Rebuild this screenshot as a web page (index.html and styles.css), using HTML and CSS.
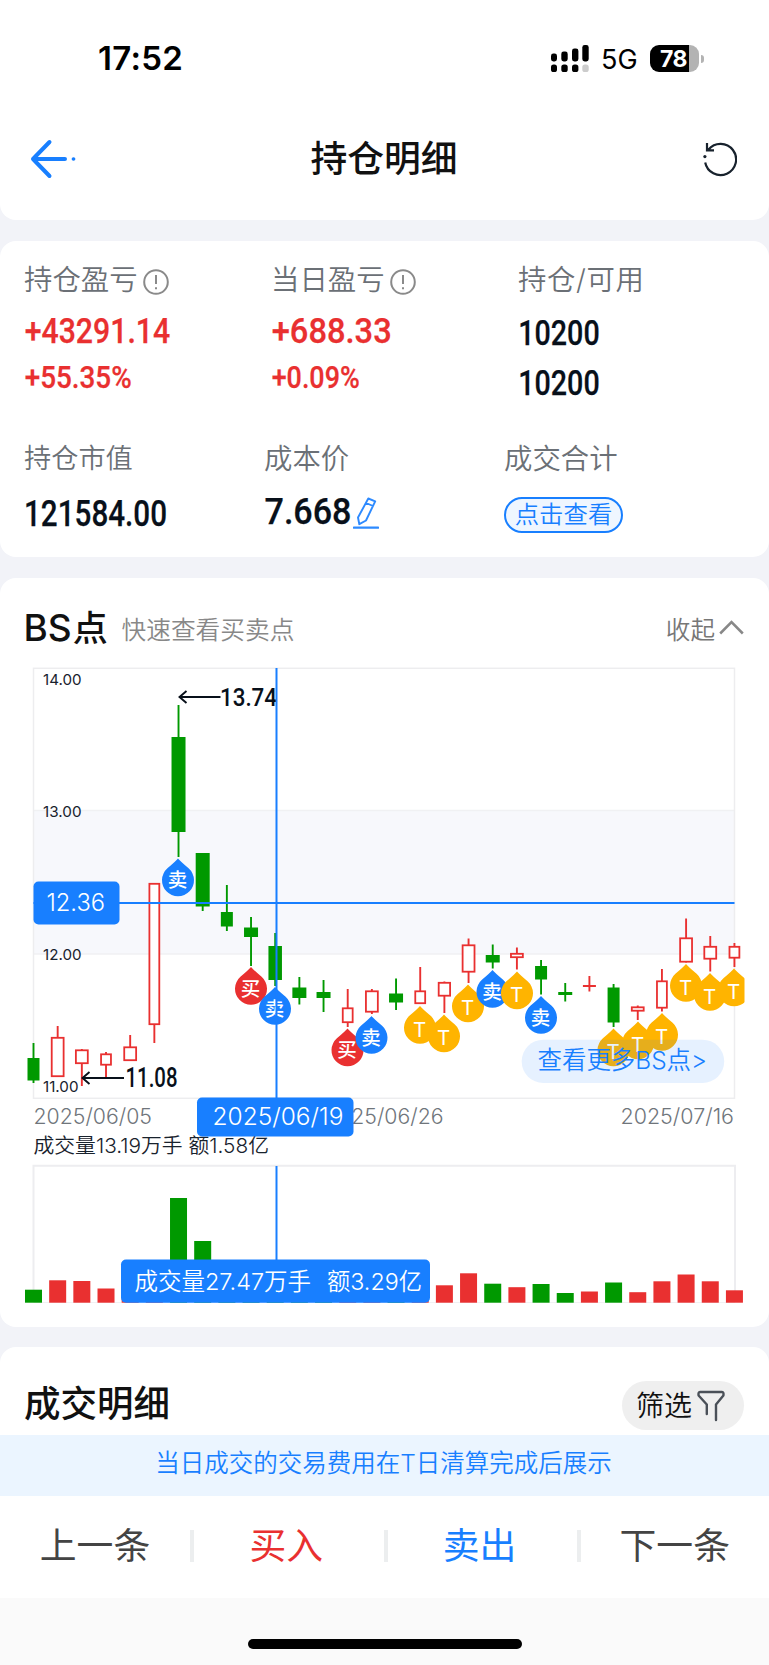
FILE: index.html
```html
<!DOCTYPE html>
<html lang="zh-CN">
<head>
<meta charset="utf-8">
<title>持仓明细</title>
<link rel="stylesheet" href="styles.css">
</head>
<body>
<div class="page">
  <header class="top">
    <div class="status">
      <span class="time">17:52</span>
      <div class="status-right">
        <svg class="signal" width="38" height="28" viewBox="0 0 38 28">
          <g fill="#000"><rect x="0" y="8.5" width="6" height="8" rx="2.4"/><rect x="10.3" y="6.5" width="6.4" height="10" rx="2.4"/><rect x="21" y="3.5" width="6.4" height="13" rx="2.4"/><rect x="31.3" y="0" width="6.4" height="16.5" rx="2.4"/>
          <rect x="0" y="19.5" width="6" height="7.5" rx="2.6"/><rect x="10.3" y="19.5" width="6.4" height="7.5" rx="2.6"/><rect x="21" y="19.5" width="6.4" height="7.5" rx="2.6"/></g>
          <rect x="31.3" y="19.5" width="6.4" height="7.5" rx="2.6" fill="#ccc"/>
        </svg>
        <span class="net">5G</span>
        <div class="battery"><span class="level">78</span></div>
        <span class="nub"></span>
      </div>
    </div>
    <div class="titlebar">
      <svg width="48" height="40" viewBox="0 0 48 40" fill="none" stroke="#187fff" stroke-width="4" stroke-linecap="round" stroke-linejoin="round"><path d="M20.5 3 4 20 20.5 37M4 20H36"/><path d="M44.4 20h.2" stroke-width="3.6"/></svg>
      <h1>持仓明细</h1>
      <svg width="34" height="36" viewBox="0 0 34 36" fill="none" stroke="#18222d" stroke-width="2.2"><path d="M5.5 8.5A15.6 15.6 0 1 1 2.2 21.5M4 2V9.3H11"/><circle cx="1.9" cy="15.6" r="1.6" fill="#18222d" stroke="none"/></svg>
    </div>
  </header>

  <section class="card summary">
    <div class="row row-a">
      <div class="cell">
        <div class="label">持仓盈亏<svg class="info" viewBox="0 0 26 26"><circle cx="13" cy="13" r="11.8"/><path d="M13 6v9M13 18.2v2"/></svg></div>
        <svg class="num red" width="148" height="30"><text x="-.3" y="26.5" font-size="35" textLength="145.5" lengthAdjust="spacingAndGlyphs">+43291.14</text></svg>
        <svg class="num red second" width="148" height="30"><text x="-.3" y="24.5" font-size="30.5" textLength="107" lengthAdjust="spacingAndGlyphs">+55.35%</text></svg>
      </div>
      <div class="cell">
        <div class="label">当日盈亏<svg class="info" viewBox="0 0 26 26"><circle cx="13" cy="13" r="11.8"/><path d="M13 6v9M13 18.2v2"/></svg></div>
        <svg class="num red" width="148" height="30"><text x="-.3" y="26.5" font-size="35" textLength="120" lengthAdjust="spacingAndGlyphs">+688.33</text></svg>
        <svg class="num red second" width="148" height="30"><text x="-.3" y="24.5" font-size="30.5" textLength="88" lengthAdjust="spacingAndGlyphs">+0.09%</text></svg>
      </div>
      <div class="cell">
        <div class="label wide">持仓/可用</div>
        <svg class="num" width="148" height="30"><text x="-.8" y="28.5" font-size="35.5" textLength="81.5" lengthAdjust="spacingAndGlyphs">10200</text></svg>
        <svg class="num third" width="148" height="30"><text x="-.8" y="28.5" font-size="35.5" textLength="81.5" lengthAdjust="spacingAndGlyphs">10200</text></svg>
      </div>
    </div>
    <div class="row row-b">
      <div class="cell">
        <div class="label small">持仓市值</div>
        <svg class="num" width="148" height="32"><text x="-1" y="28.5" font-size="36.5" textLength="143" lengthAdjust="spacingAndGlyphs">121584.00</text></svg>
      </div>
      <div class="cell">
        <div class="label">成本价</div>
        <div class="cost">
          <svg class="num" width="87" height="32"><text x="-.5" y="26.5" font-size="37" textLength="87" lengthAdjust="spacingAndGlyphs">7.668</text></svg>
          <svg width="26" height="33" viewBox="0 0 26 33" fill="none" stroke="#2d8aff" stroke-width="1.9" stroke-linejoin="round"><path d="M15.3 1.5 22.2 4.3 13 23.5 6.3 27.2 5 20.5ZM13.2 6 20 9"/><path d="M1 30.6H25" stroke-width="2.4" stroke-linecap="round"/></svg>
        </div>
      </div>
      <div class="cell">
        <div class="label">成交合计</div>
        <div class="pill">点击查看</div>
      </div>
    </div>
  </section>

  <section class="card bs">
    <div class="bs-head">
      <h2><span class="latin">BS</span>点</h2><span class="hint">快速查看买卖点</span>
      <span class="fold">收起<svg width="25" height="15" viewBox="0 0 25 15" fill="none" stroke="#888" stroke-width="2.5"><path d="M1.2 13.5 12.5 2 23.8 13.5"/></svg></span>
    </div>
    <svg id="chart" class="chart" width="769" height="650" viewBox="0 660 769 650"></svg>
  </section>

  <section class="card deals">
    <h2>成交明细</h2>
    <div class="filter">筛选<svg width="28" height="32" viewBox="0 0 28 32" fill="none" stroke="#4a5058" stroke-width="2.4" stroke-linecap="round" stroke-linejoin="round"><path d="M9.8 24V14.5L1.6 5.5Q1 2 3 2H25Q27 2 26.4 5.5L19 14.5V30"/></svg></div>
  </section>
  <div class="notice">当日成交的交易费用在T日清算完成后展示</div>
  <nav class="actions">
    <span>上一条</span><span class="buy">买入</span><span class="sell">卖出</span><span>下一条</span>
  </nav>
  <div class="home"><i></i></div>
</div>
<script src="chart.js"></script>
</body>
</html>
```
FILE: styles.css
```css
* { box-sizing: border-box; }
body {
  margin: 0;
  background: #f2f3f8;
  color: #111;
  font-family: Inter, "Noto Sans CJK SC", sans-serif;
}
.page { width: 769px; height: 1665px; overflow: hidden; display: flex; flex-direction: column; }
h1, h2 { margin: 0; font-weight: 500; }
svg { display: block; flex: none; }
.top { height: 220px; background: #fff; border-radius: 0 0 16px 16px; flex: none; }
.status { height: 114px; display: flex; justify-content: space-between; align-items: flex-start; padding: 37px 65px 0 98px; }
.time { font-size: 33px; font-weight: 600; line-height: 43px; letter-spacing: .3px; color: #000; }
.status-right { display: flex; align-items: center; padding-top: 6.5px; }
.signal { margin-left: -1px; }
.net { font-size: 27px; line-height: 29px; margin-left: 12px; width: 49px; color: #000; padding-top: 1px; }
.battery { width: 49px; height: 27.5px; border-radius: 9px; overflow: hidden; background: linear-gradient(90deg, #000 39px, #b3b3b3 39px); }
.level { display: block; padding-left: 10px; color: #fff; font-size: 23px; font-weight: 700; line-height: 28.5px; letter-spacing: -.6px; }
.nub { width: 3px; height: 8px; margin-left: 2px; border-radius: 0 4px 4px 0; background: #b3b3b3; }
.titlebar { display: flex; align-items: center; justify-content: space-between; padding: 0 32px 2px 29px; height: 92px; }
h1 { font-size: 36.8px; line-height: 50px; margin-left: -12px; }
.card { background: #fff; border-radius: 16px; flex: none; }
.summary { margin-top: 20.5px; height: 316.5px; padding: 21px 0 0 25px; }
.row { display: grid; }
.row-a { grid-template-columns: 247px 247px 1fr; height: 179px; }
.row-b { grid-template-columns: 240px 240px 1fr; }
.label { display: flex; align-items: center; font-size: 28.4px; font-weight: 350; line-height: 36px; height: 36px; color: #6b7076; margin: 0 0 18.5px -1px; }
.small { font-size: 27.2px; }
.wide { letter-spacing: .6px; }
.info { width: 26px; height: 26px; margin: 4px 0 0 5px; fill: none; stroke: #8a8a8a; stroke-width: 2; }
.num { overflow: visible; font-family: Roboto, "Noto Sans", sans-serif; font-weight: 500; fill: #08101a; stroke: #08101a; stroke-width: .25; }
.red { fill: #e93030; stroke: #e93030; }
.second { margin-top: 16.5px; }
.third { margin-top: 19.5px; }
.row-b .label { margin-bottom: 20px; }
.row-b .pill { margin-left: -1px; }
.cost { display: flex; gap: 1px; }
.pill { width: 119px; height: 36.5px; border: 2px solid #187fff; border-radius: 19px; background: #eff6ff; color: #187fff; font-size: 24.4px; font-weight: 350; line-height: 31px; text-align: center; }
.bs { margin-top: 20.5px; height: 749px; }
.bs-head { height: 82px; display: flex; align-items: center; padding: 18px 25px 0 23.5px; }
.bs-head h2 { font-size: 35px; line-height: 50px; width: 85px; white-space: nowrap; }
.latin { font-family: Inter, sans-serif; font-size: 37px; margin-right: 1px; }
.hint { margin-left: 13px; font-size: 24.7px; font-weight: 350; color: #888; }
.fold { margin-left: auto; display: flex; align-items: center; gap: 4px; font-size: 24.6px; font-weight: 350; color: #777; }
.chart { font-weight: 350; }
.deals { margin-top: 20.5px; height: 88px; border-radius: 16px 16px 0 0; display: flex; justify-content: space-between; align-items: flex-start; padding: 34px 25px 0 24px; }
.deals h2 { font-size: 36.5px; line-height: 46px; }
.filter { width: 122.5px; height: 49px; border-radius: 25px; background: #efefef; display: flex; align-items: center; gap: 5px; padding-left: 14.5px; font-size: 28px; font-weight: 350; line-height: 40px; }
.notice { height: 61px; flex: none; background: #ebf5ff; color: #187fff; font-size: 24.5px; font-weight: 350; line-height: 57px; text-align: center; padding-right: 2px; }
.actions { height: 102px; flex: none; background: #fff; display: grid; grid-template-columns: 190px 193.5px 193px 1fr; align-items: center; font-size: 36.8px; line-height: 32px; color: #444; text-align: center; padding-bottom: 2px; }
.actions span + span { border-left: 4px solid #eceeef; }
.actions .buy { color: #e93030; padding-right: 5px; }
.actions .sell { color: #187fff; padding-right: 5px; }
.home { flex: 1; background: #fafafa; padding-top: 40.5px; }
.home i { display: block; width: 274px; height: 10.5px; margin: 0 auto; border-radius: 6px; background: #000; }
.din { font-family: Roboto, "Noto Sans", sans-serif; font-weight: 500; fill: #08101a; }
```
FILE: chart.js
```js
const BLUE = '#187fff', RED = '#e93030', GREEN = '#009900', YELLOW = '#ffb400';
const cx = i => 33.5 + i * 24.17;
const out = [];
const line = (x1, y1, x2, y2, c, w) => out.push(`<path d="M${x1} ${y1}L${x2} ${y2}" stroke="${c}" stroke-width="${w}" fill="none"/>`);
const rect = (x, y, w, h, f, extra = '') => out.push(`<rect x="${x}" y="${y}" width="${w}" height="${h}" fill="${f}" ${extra}/>`);
const text = (s, x, y, size, len, fill, extra = '') => out.push(`<text x="${x}" y="${y}" font-size="${size}" textLength="${len}" lengthAdjust="spacingAndGlyphs" fill="${fill}" ${extra}>${s}</text>`);

// price frame
rect(33.5, 810.5, 701, 143.5, '#f7f8fc');
line(33.5, 810.5, 734.5, 810.5, '#f0f1f3', 1.3);
line(33.5, 954, 734.5, 954, '#f0f1f3', 1.3);
rect(33.5, 668.3, 701, 430, 'none', 'stroke="#ededef" stroke-width="1.5"');

// candles: colour, width, high, body top, body bottom, low
const candles = [
  ['g', 12, 1043, 1058, 1080.5, 1083], ['r', 13.5, 1026, 1037, 1077, 1077], ['r', 13.5, 1049, 1049.5, 1064, 1086],
  ['r', 11.5, 1052, 1053.5, 1065.5, 1078], ['r', 13.5, 1035, 1046.5, 1061, 1061], ['r', 11.5, 883, 883, 1025, 1043],
  ['g', 14, 705, 737, 832, 857], ['g', 14, 853, 853, 906.5, 911], ['g', 12, 885, 912, 926.5, 931],
  ['g', 14, 917, 927.5, 937, 966], ['g', 13.5, 933, 946, 980, 986], ['g', 14, 977, 987.5, 998, 1004.5],
  ['g', 14, 980, 992, 998, 1012], ['r', 11.5, 989, 1007.5, 1023, 1027], ['r', 13.5, 989, 990.5, 1012.5, 1014],
  ['g', 14, 978.5, 993.5, 1002.5, 1010], ['r', 11.5, 967, 990.5, 1004, 1004], ['r', 13, 981.5, 982, 996.5, 1013],
  ['r', 13.5, 938.5, 944.5, 972.5, 983], ['g', 14, 944.5, 955, 962.5, 968.5], ['r', 13.5, 947.5, 953, 958, 969.5],
  ['g', 12, 960, 966, 979.5, 994.5], ['g', 14, 983, 992, 995, 1001.5], ['r', 13, 976, 985, 987, 991.5],
  ['g', 12, 984, 987.5, 1022.5, 1027], ['r', 13.5, 1005.5, 1006.5, 1011.5, 1020], ['r', 11.5, 969, 980.5, 1008.5, 1011.5],
  ['r', 13.5, 918.5, 937.5, 962.5, 962.5], ['r', 13.5, 936, 946, 959.5, 971.5], ['r', 11.5, 943, 946, 958.5, 967]
];
candles.forEach(([c, w, hi, top, bot, lo], i) => {
  const x = cx(i), col = c === 'g' ? GREEN : RED;
  line(x, hi, x, lo, col, 1.9);
  if (c === 'g' || bot - top < 3) rect(x - w / 2, top, w, bot - top, col);
  else rect(x - w / 2 + .8, top + .8, w - 1.6, bot - top - 1.6, '#fff', `stroke="${col}" stroke-width="1.8"`);
});

// axis labels
text('14.00', 43, 685, 15, 38.5, '#18222d', 'font-weight="400"');
text('13.00', 43, 817, 15, 38.5, '#18222d', 'font-weight="400"');
text('12.00', 43, 960, 15, 38.5, '#18222d', 'font-weight="400"');
text('11.00', 43, 1091.5, 15, 35.5, '#18222d', 'font-weight="400"');

// high and low callouts
const arrow = (x, y, x2) => out.push(`<path d="M${x2} ${y}H${x}M${x + 7} ${y - 6}L${x} ${y}L${x + 7} ${y + 6}" fill="none" stroke="#08101a" stroke-width="1.9"/>`);
arrow(179.5, 697, 220.5);
text('13.74', 220, 706, 26.5, 57, '#08101a', 'class="din"');
arrow(82.5, 1078, 124);
text('11.08', 125.5, 1086.5, 27, 52, '#08101a', 'class="din"');

// trade pins: centre, tip, glyph
const pins = [
  [178, 858.5, '卖'], [251, 967, '买'], [275, 987, '卖'], [347.5, 1028.5, '买'], [371.5, 1016, '卖'],
  [420, 1006, 'T'], [444, 1014.5, 'T'], [468, 984.5, 'T'], [492.5, 970, '卖'], [517, 971.5, 'T'],
  [541, 996, '卖'], [613.5, 1028.5, 'T'], [638, 1021.5, 'T'], [662, 1013, 'T'], [686, 964, 'T'],
  [710, 973, 'T'], [734, 968.5, 'T']
];
out.push('<clipPath id="edge"><rect x="0" y="660" width="744.5" height="650"/></clipPath><g clip-path="url(#edge)">');
pins.forEach(([x, y, s]) => {
  const col = s === 'T' ? YELLOW : s === '买' ? RED : BLUE;
  out.push(`<path d="M${x} ${y}Q${x + 2} ${y + 2.5} ${x + 10.6} ${y + 9.8}A16 16 0 1 1 ${x - 10.6} ${y + 9.8}Q${x - 2} ${y + 2.5} ${x} ${y}Z" fill="${col}"/>`);
  out.push(s === 'T'
    ? `<text x="${x - .5}" y="${y + 30.5}" font-size="20.5" font-weight="400" text-anchor="middle" fill="#fff">T</text>`
    : `<text x="${x - .5}" y="${y + 28.5}" font-size="19.5" font-weight="500" text-anchor="middle" fill="#fff">${s}</text>`);
});
out.push('</g>');

// more button
rect(521.7, 1039.7, 202.5, 43.3, '#187fff', 'rx="21.6" fill-opacity=".11"');
text('查看更多BS点&gt;', 537.5, 1069, 24.5, 169.5, BLUE);

// dates
text('2025/06/05', 33.5, 1124, 21.5, 118.5, '#6f757b');
text('2025/06/26', 325, 1124, 21.5, 118.5, '#6f757b');
text('2025/07/16', 620.5, 1124, 21.5, 113.5, '#6f757b');
text('成交量13.19万手 额1.58亿', 33.5, 1152.5, 20.5, 235.5, '#18222d');

// crosshair
line(33.5, 903, 734.5, 903, BLUE, 2);
line(276.5, 668, 276.5, 1100, BLUE, 2);
rect(33.5, 881.5, 86, 43, BLUE, 'rx="5"');
text('12.36', 46.5, 911.3, 23.5, 58.5, '#fff');
rect(197, 1097.5, 156.5, 39, BLUE, 'rx="5"');
text('2025/06/19', 212.5, 1125, 23.5, 131, '#fff');

// volume
out.push('<path d="M33.5 1302V1165.8H735V1302" fill="none" stroke="#ededf0" stroke-width="2"/>');
line(33.5, 1302.5, 735, 1302.5, '#f1f1f3', 1);
const volumes = [
  ['g', 1289.7], ['r', 1280.3], ['r', 1281], ['r', 1288.5], ['r', 1290], ['r', 1290], ['g', 1198], ['g', 1241],
  ['g', 1270], ['g', 1275], ['g', 1270], ['g', 1285], ['g', 1285], ['r', 1285], ['r', 1285], ['g', 1285], ['r', 1288],
  ['r', 1285.3], ['r', 1273.3], ['g', 1283.7], ['r', 1287.2], ['g', 1284], ['g', 1293], ['r', 1291.5], ['g', 1282.5],
  ['r', 1292.2], ['r', 1281.3], ['r', 1274.5], ['r', 1281.3], ['r', 1290.3]
];
volumes.forEach(([c, y], i) => rect(cx(i) - 8.5, y, 17, 1302.7 - y, c === 'g' ? GREEN : RED));
line(276.5, 1166, 276.5, 1262, BLUE, 2);
rect(121, 1259.5, 309, 43.3, BLUE, 'rx="5"');
text('成交量27.47万手', 134.5, 1289.7, 23.4, 176.5, '#fff');
text('额3.29亿', 327, 1289.7, 23.4, 95, '#fff');

document.getElementById('chart').innerHTML = out.join('');
```
